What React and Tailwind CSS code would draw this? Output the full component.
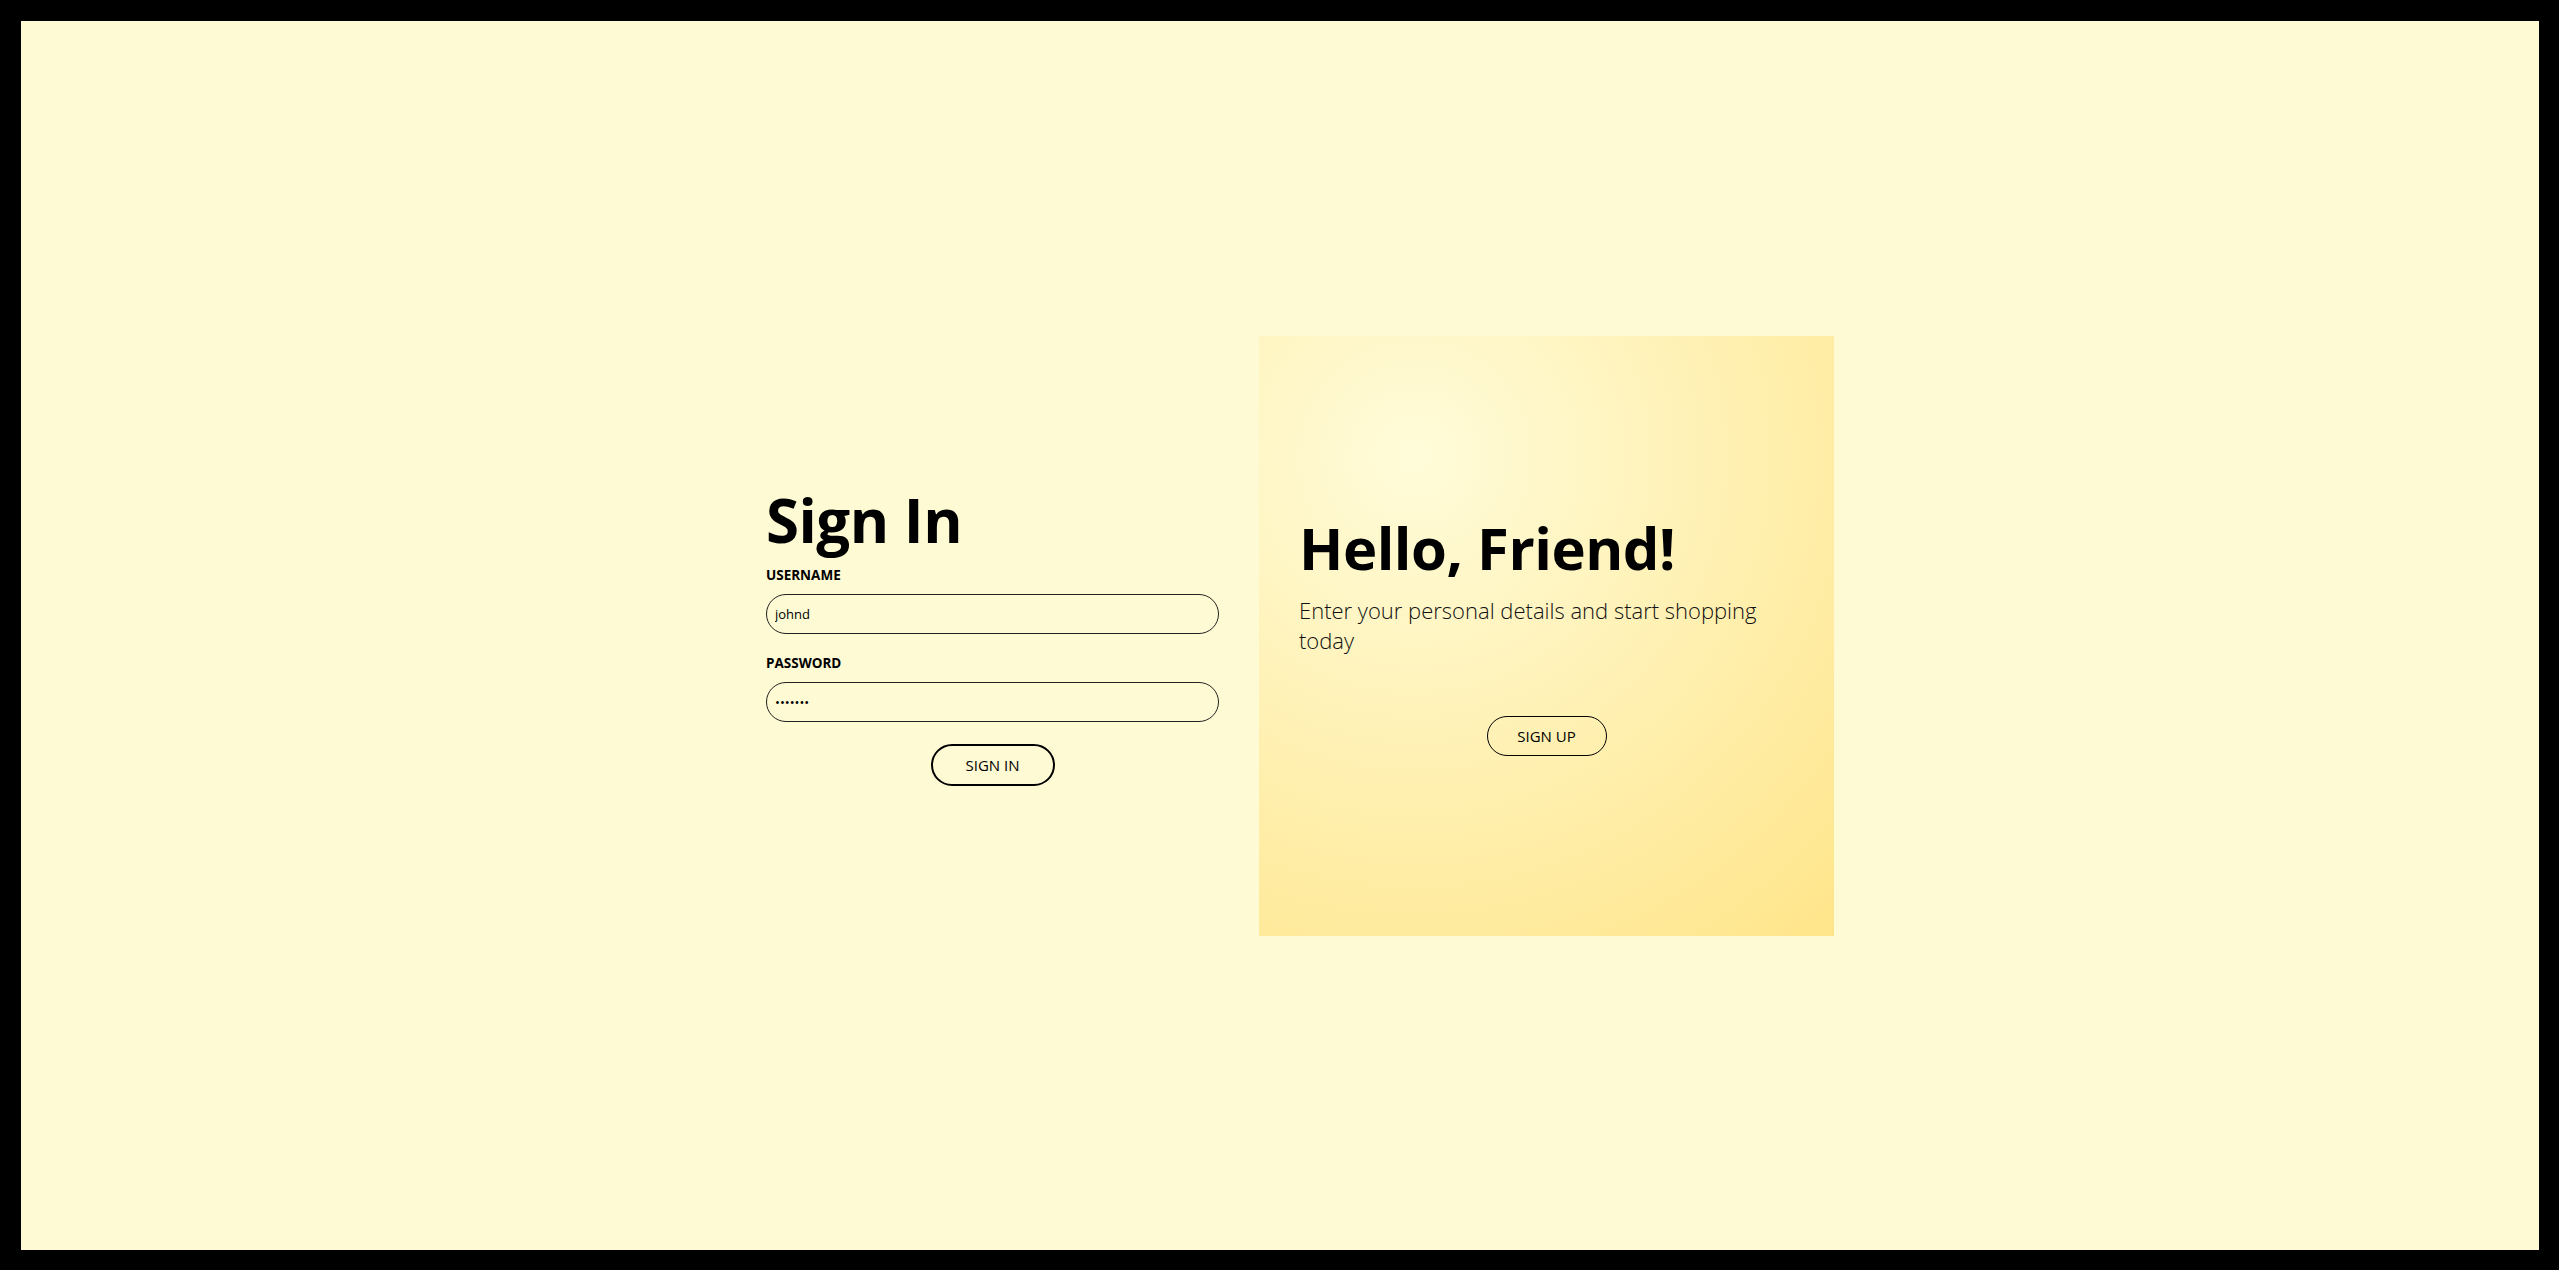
import React, { useState } from "react"

const font = { fontFamily: '"Open Sans", "Noto Sans", sans-serif' }

const SignInForm = () => {
  const [username, setUsername] = useState("johnd")
  const [password, setPassword] = useState("m38rmF$")

  return (
    <form
      className="w-[533px] px-10 pt-[5px] flex flex-col"
      onSubmit={(e) => e.preventDefault()}
    >
      <h1 className="text-[60px] leading-[60px] font-bold text-black tracking-[-0.5px]">Sign In</h1>
      <label className="mt-[15px] text-[13.5px] leading-[21px] font-bold text-black">USERNAME</label>
      <input
        type="text"
        value={username}
        onChange={(e) => setUsername(e.target.value)}
        className="mt-2 h-[40px] w-full rounded-full border border-[#222] bg-transparent px-2 text-[13px] text-black outline-none"
      />
      <label className="mt-[19px] text-[13.5px] leading-[21px] font-bold text-black">PASSWORD</label>
      <input
        type="password"
        value={password}
        onChange={(e) => setPassword(e.target.value)}
        className="mt-2 h-[40px] w-full rounded-full border border-[#222] bg-transparent px-2 text-[13px] text-black outline-none"
      />
      <button
        type="submit"
        className="mt-[22px] self-center h-[42px] w-[124px] rounded-full border-2 border-black text-[15px] text-black"
      >
        SIGN IN
      </button>
    </form>
  )
}

const WelcomePanel = () => (
  <div className="w-[575px] h-[600px] px-10 flex flex-col justify-center bg-[radial-gradient(circle_at_27%_20%,#fffcda,#ffe58a)]">
    <h2 className="pt-[3px] text-[58px] leading-[60px] font-bold text-black tracking-[-0.5px]">Hello, Friend!</h2>
    <p className="mt-[17px] text-[22px] leading-[30px] font-light text-[#111]">
      Enter your personal details and start shopping today
    </p>
    <button className="mt-[61px] self-center h-[40px] w-[120px] rounded-full border border-black text-[15px] text-black">
      SIGN UP
    </button>
  </div>
)

export default function App() {
  return (
    <div className="h-screen w-full bg-black pt-[21px] pl-[21px] pr-[20px] pb-[20px]" style={font}>
      <div className="h-full w-full bg-[#fefad4] flex items-center justify-center">
        <div className="flex items-center">
          <SignInForm />
          <WelcomePanel />
        </div>
      </div>
    </div>
  )
}
